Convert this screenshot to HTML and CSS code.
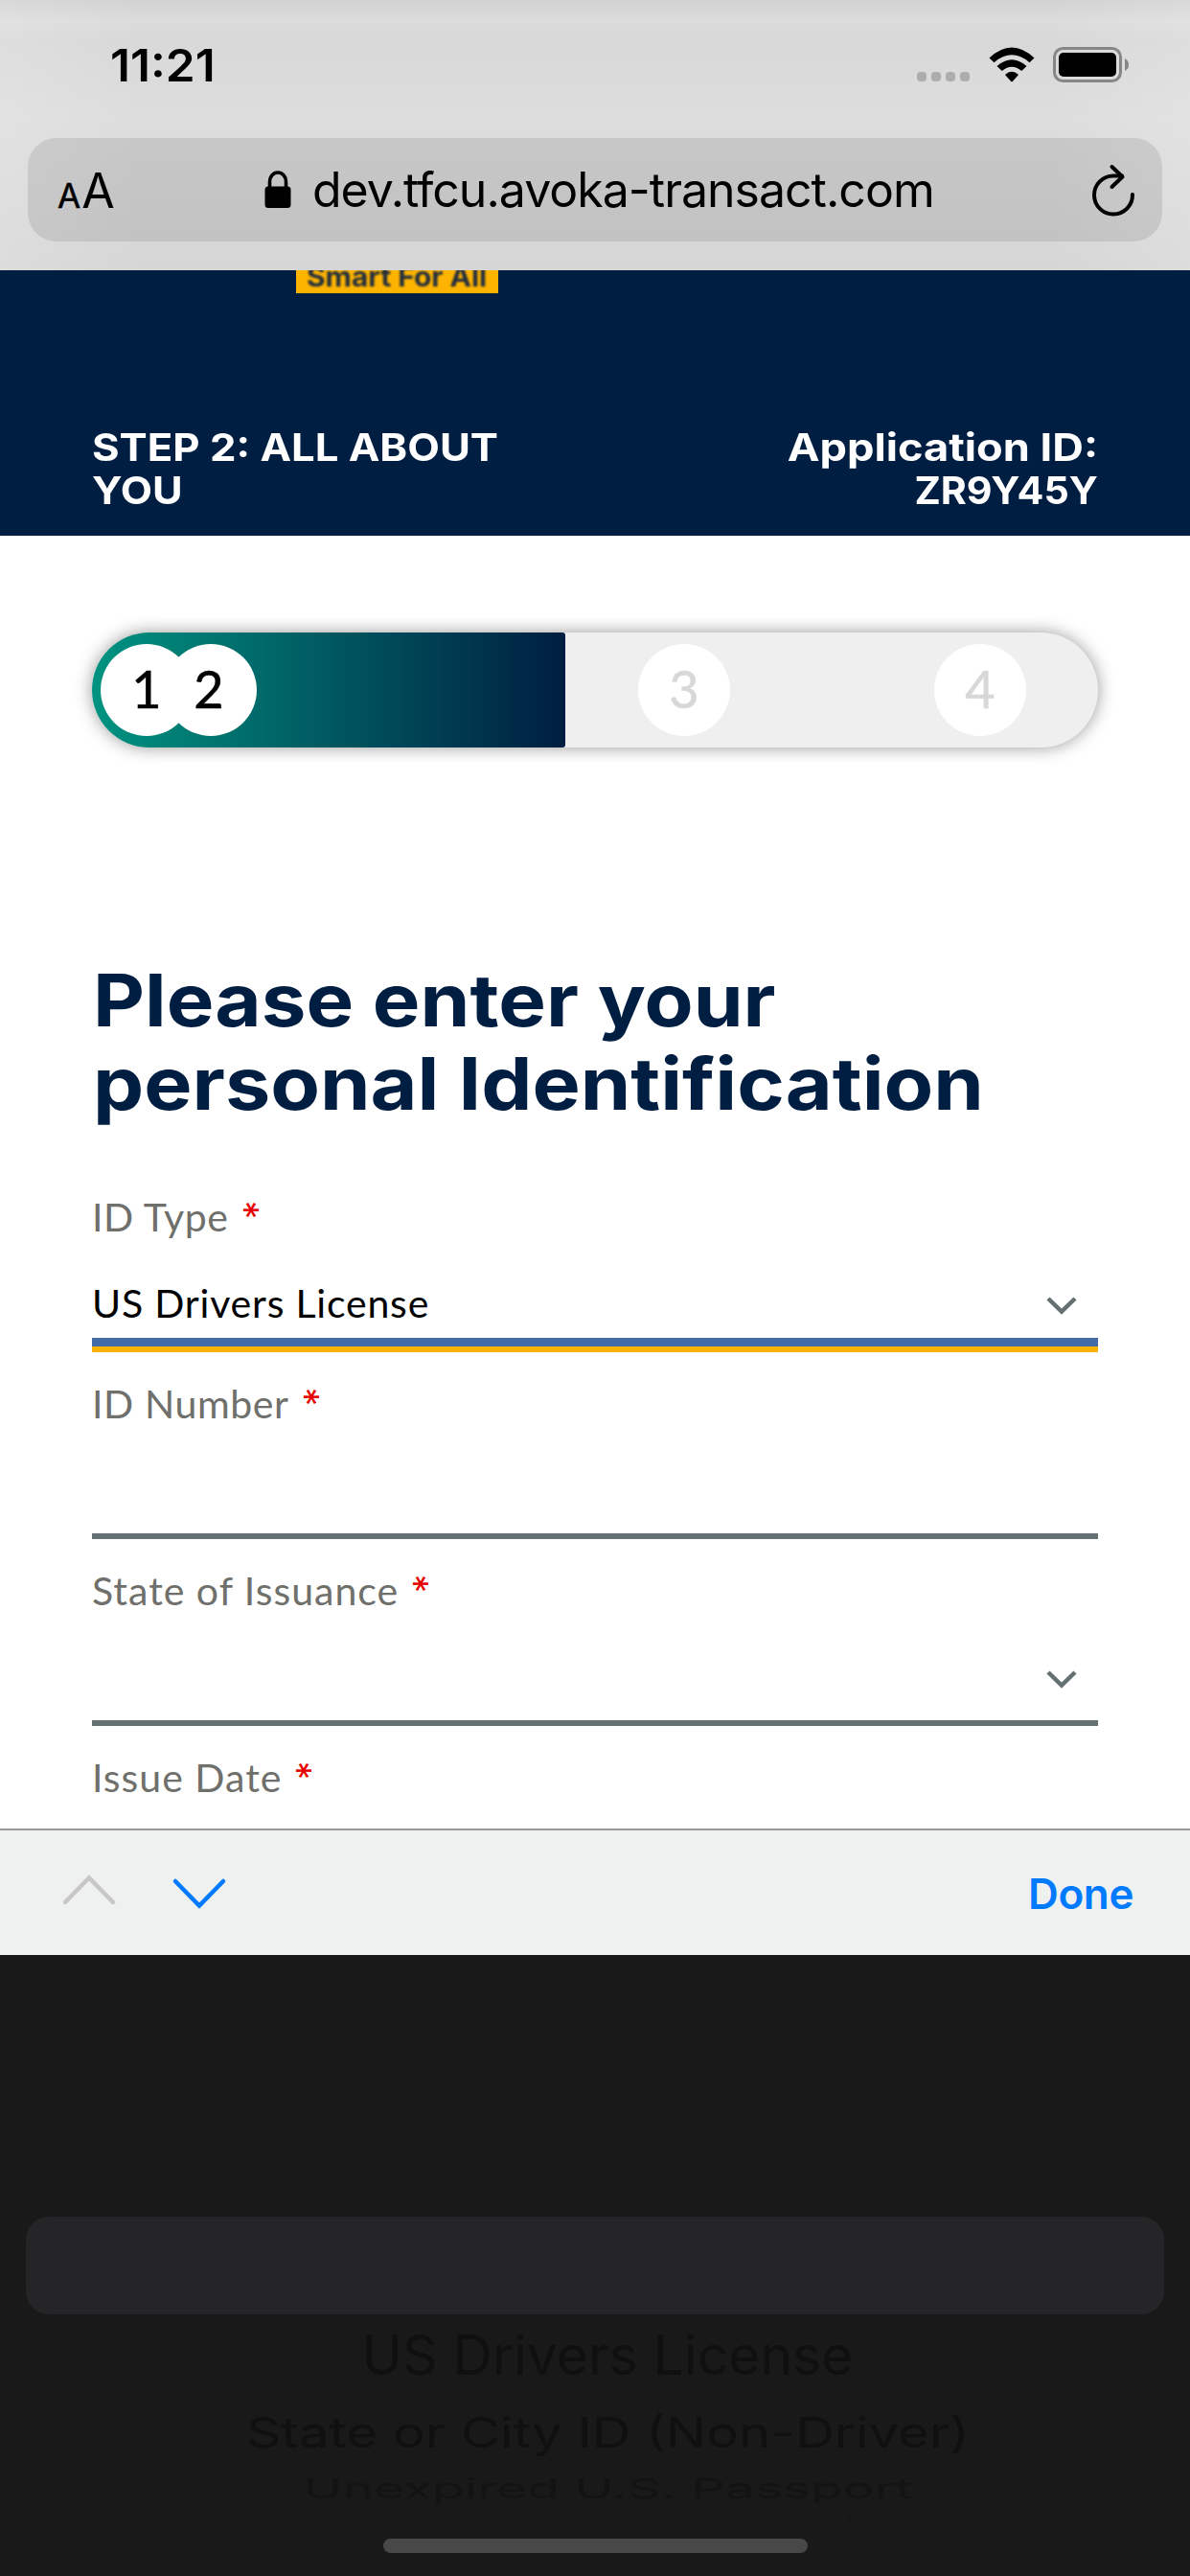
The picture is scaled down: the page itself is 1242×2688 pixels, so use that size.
FILE: index.html
```html
<!DOCTYPE html>
<html lang="en">
<head>
<meta charset="utf-8">
<title>Application</title>
<link rel="stylesheet" href="styles.css">
</head>
<body>
<div class="browser">
  <div class="status">
    <span class="time fit">11:21</span>
    <span class="indicators">
      <span class="dots"><i></i><i></i><i></i><i></i></span>
      <svg class="wifi" width="48" height="37" viewBox="0 0 48 37"><path d="M0.5 11.5 Q24 -10.5 47.500 11.500 L42.500 16.200 Q24 0.500 5.500 16.200Z"/><path d="M8.500 20 Q24 6.500 39.500 20 L34.300 25 Q24 16.500 13.700 25Z"/><path d="M17 29 Q24 22.500 31 29 L24.800 36 Q24 36.500 23.200 36Z"/></svg>
      <svg class="battery" width="80" height="38" viewBox="0 0 80 38"><rect x="1.500" y="1.500" width="69" height="34" rx="9" fill="none" stroke="#868686" stroke-width="3"/><rect x="6" y="6" width="60" height="25" rx="5"/><path d="M75 12 Q79 14 79 18.500 Q79 23 75 25Z" fill="#868686"/></svg>
    </span>
  </div>
  <div class="address">
    <span class="aa"><small>A</small>A</span>
    <svg class="lock" width="28" height="40" viewBox="0 0 28 40"><path d="M5.500 19V11.500a8.500 9.500 0 0 1 17 0v7.500" fill="none" stroke="#000" stroke-width="3.600"/><rect x="0.500" y="16.500" width="27" height="22.500" rx="3.500"/></svg>
    <span class="url">dev.tfcu.avoka-transact.com</span>
    <svg class="reload" width="48" height="56" viewBox="0 0 48 56"><g fill="none" stroke="#000" stroke-width="4" stroke-linecap="round" stroke-linejoin="round"><path d="M44 32A20 20 0 1 1 24 12.500H33"/><path d="M22.500 3 33.500 13.500 22.500 24"/></g></svg>
  </div>
</div>

<header class="head">
  <div class="tagline"><span class="fit">Smart For All</span></div>
  <div class="step"><span class="fit step-a">STEP 2: ALL ABOUT</span><br><span class="fit step-b">YOU</span></div>
  <div class="appid"><span class="fit app-a">Application ID:</span><br><span class="fit app-b">ZR9Y45Y</span></div>
</header>

<main class="page">
  <div class="progress">
    <div class="done-part"></div>
    <b class="n n1">1</b><b class="n n2">2</b><b class="n n3">3</b><b class="n n4">4</b>
  </div>
  <h1><span class="fit h-a">Please enter your</span><br><span class="fit h-b">personal Identification</span></h1>
  <div class="field active">
    <label>ID Type<em>*</em></label>
    <div class="value">US Drivers License<svg width="34" height="20" viewBox="0 0 34 20"><path d="M3 3 17 16.500 31 3"/></svg></div>
  </div>
  <div class="field">
    <label>ID Number<em>*</em></label>
    <div class="value"></div>
  </div>
  <div class="field">
    <label class="wide">State of Issuance<em>*</em></label>
    <div class="value"><svg width="34" height="20" viewBox="0 0 34 20"><path d="M3 3 17 16.500 31 3"/></svg></div>
  </div>
  <div class="field">
    <label class="wide">Issue Date<em>*</em></label>
  </div>
</main>

<div class="toolbar">
  <svg width="58" height="34" viewBox="0 0 58 34"><path d="M4 30 29 4.500 54 30" stroke="#c7c7c9"/></svg>
  <svg width="58" height="34" viewBox="0 0 58 34"><path d="M4 4 29 29.500 54 4" stroke="#007aff"/></svg>
  <span class="done">Done</span>
</div>

<div class="picker">
  <div class="band"></div>
  <div class="opt o1"><span class="fit">US Drivers License</span></div>
  <div class="opt o2"><span class="fit">State or City ID (Non-Driver)</span></div>
  <div class="opt o3"><span class="fit">Unexpired U.S. Passport</span></div>
  <div class="opt o4"><span class="fit">Unexpired Foreign Passport</span></div>
  <div class="home"></div>
</div>
</body>
</html>
```
FILE: styles.css
```css
* { box-sizing: border-box; }
body { margin: 0; width: 1242px; height: 2688px; overflow: hidden; background: #fff; color: #000; font-family: Inter, sans-serif; }
svg { display: block; flex: none; }
.fit { display: inline-block; white-space: nowrap; transform-origin: 0 50%; }

.browser {
  height: 282px;
  padding: 0 29px;
  background:
    linear-gradient(90deg, rgba(255,255,255,.15), rgba(255,255,255,0) 150px calc(100% - 150px), rgba(255,255,255,.15)),
    linear-gradient(#d2d2d2, #dcdcdc 22px, #d8d8d8 40px, #dddddd 120px, #d6d6d6 282px);
}
.status { height: 144px; display: flex; justify-content: space-between; padding: 0 34px 0 86px; }
.time { font-size: 47px; font-weight: 600; line-height: 60px; margin-top: 38px; height: 60px; transform: scaleX(1.055); }
.indicators { display: flex; padding-top: 49px; }
.dots { display: flex; gap: 5px; padding-top: 26px; margin-right: 20px; }
.dots i { width: 10px; height: 10px; border-radius: 4px; background: #adadad; }
.wifi { margin-right: 19px; }
.address { height: 108px; border-radius: 30px; background: rgba(0,0,0,.095); display: flex; align-items: flex-start; padding-left: 31px; }
.aa { width: 58px; margin-top: 25px; font-size: 50px; line-height: 60px; letter-spacing: 1px; white-space: nowrap; }
.aa small { font-size: 35px; -webkit-text-stroke: .5px currentColor; }
.lock { margin: 34px 0 0 158px; }
.url { font-size: 50px; line-height: 60px; letter-spacing: -1px; font-variant-ligatures: none; margin: 24px 0 0 22px; width: 650px; }
.reload { margin: 27px 0 0 162px; }

.head { height: 277px; background: #001e41; color: #fff; font-size: 40px; line-height: 45px; font-weight: 700; display: grid; grid-template-columns: 430px 1fr; grid-template-rows: 162px 1fr; padding: 0 96px; }
.tagline { grid-column: 1 / 3; margin-left: 213px; width: 211px; height: 24px; background: #fdb400; color: #26303c; overflow: hidden; font-size: 28px; line-height: 28px; padding-left: 11px; display: flex; align-items: flex-start; }
.tagline .fit { margin-top: -7px; filter: blur(.8px); transform: scaleX(1.070); }
.appid { text-align: right; }
.appid .fit { transform-origin: 100% 50%; }
.step-a { transform: scaleX(1.092); }
.step-b { transform: scaleX(1.080); }
.app-a { transform: scaleX(1.130); }
.app-b { transform: scaleX(1.030); }

.page { height: 1349px; padding: 101px 96px 0; }
.progress { position: relative; height: 120px; border-radius: 60px; background: #efefef; box-shadow: 0 0 18px rgba(0,0,0,.4); }
.done-part { width: 494px; height: 120px; border-radius: 60px 3px 3px 60px; background: linear-gradient(90deg, #009380, #001e41); }
.n { position: absolute; top: 12px; width: 96px; height: 96px; border-radius: 50%; background: #fff; font: 400 54px/94px Lato, sans-serif; text-align: center; -webkit-text-stroke: .6px currentColor; }
.n1 { left: 9px; }
.n2 { left: 76px; padding-right: 4px; }
.n3 { left: 570px; color: #d8d8d8; }
.n4 { left: 879px; color: #d8d8d8; }
h1 { margin: 220px 0 66px 1px; color: #001e41; font-size: 76px; line-height: 87px; font-weight: 700; }
.h-a { transform: scaleX(1.098); }
.h-b { transform: scaleX(1.111); }
.field { height: 195px; font: 400 41px/60px Lato, sans-serif; letter-spacing: .8px; }
label { display: flex; height: 60px; color: #6f6f6b; letter-spacing: .6px; }
.wide { letter-spacing: 1px; }
label em { width: 17px; height: 44px; margin: 1px 0 0 16px; color: #e60000; font: 400 39px/60px Inter, sans-serif; letter-spacing: 0; display: flex; justify-content: center; transform: rotate(90deg); transform-origin: 50% 21.500px; }
.value { height: 111px; border-bottom: 6px solid #657072; display: flex; justify-content: space-between; padding: 30px 21px 0 0; }
.value svg { margin: 22px 0 0 auto; }
.value path { fill: none; stroke: #657072; stroke-width: 4.500; }
.active .value { border-bottom-color: #fdb400; box-shadow: inset 0 -9px #436ba5; }

.toolbar { height: 132px; border-top: 2px solid #98989a; background: #eff0f0; display: flex; padding: 45px 61px 0 64px; }
.toolbar svg + svg { margin: 4px 0 0 57px; }
.toolbar path { fill: none; stroke-width: 4.500; stroke-linecap: round; }
.done { margin: -9px -2px 0 auto; color: #007aff; font-size: 44px; line-height: 60px; font-weight: 600; height: 60px; letter-spacing: -.4px; }

.picker { height: 648px; background: #191919; padding-top: 273px; color: #101010; }
.band { height: 102px; margin: 0 27px; border-radius: 24px; background: #252527; }
.opt { white-space: nowrap; text-align: center; padding-left: 26px; }
.opt .fit { transform-origin: 50% 50%; }
.o1 { font-size: 57px; height: 85px; line-height: 85px; }
.o2 { font-size: 52px; height: 78px; line-height: 78px; }
.o2 .fit { transform: scale(1.083, .85); }
.o3 { font-size: 45px; height: 37px; line-height: 37px; color: #131313; }
.o3 .fit { transform: scale(1.226, .640); }
.o4 { font-size: 45px; height: 20px; line-height: 20px; color: #181818; }
.o4 .fit { transform: scale(1.186, .250); }
.home { width: 443px; height: 15px; margin: 14px auto 0; border-radius: 8px; background: #484848; }
```
